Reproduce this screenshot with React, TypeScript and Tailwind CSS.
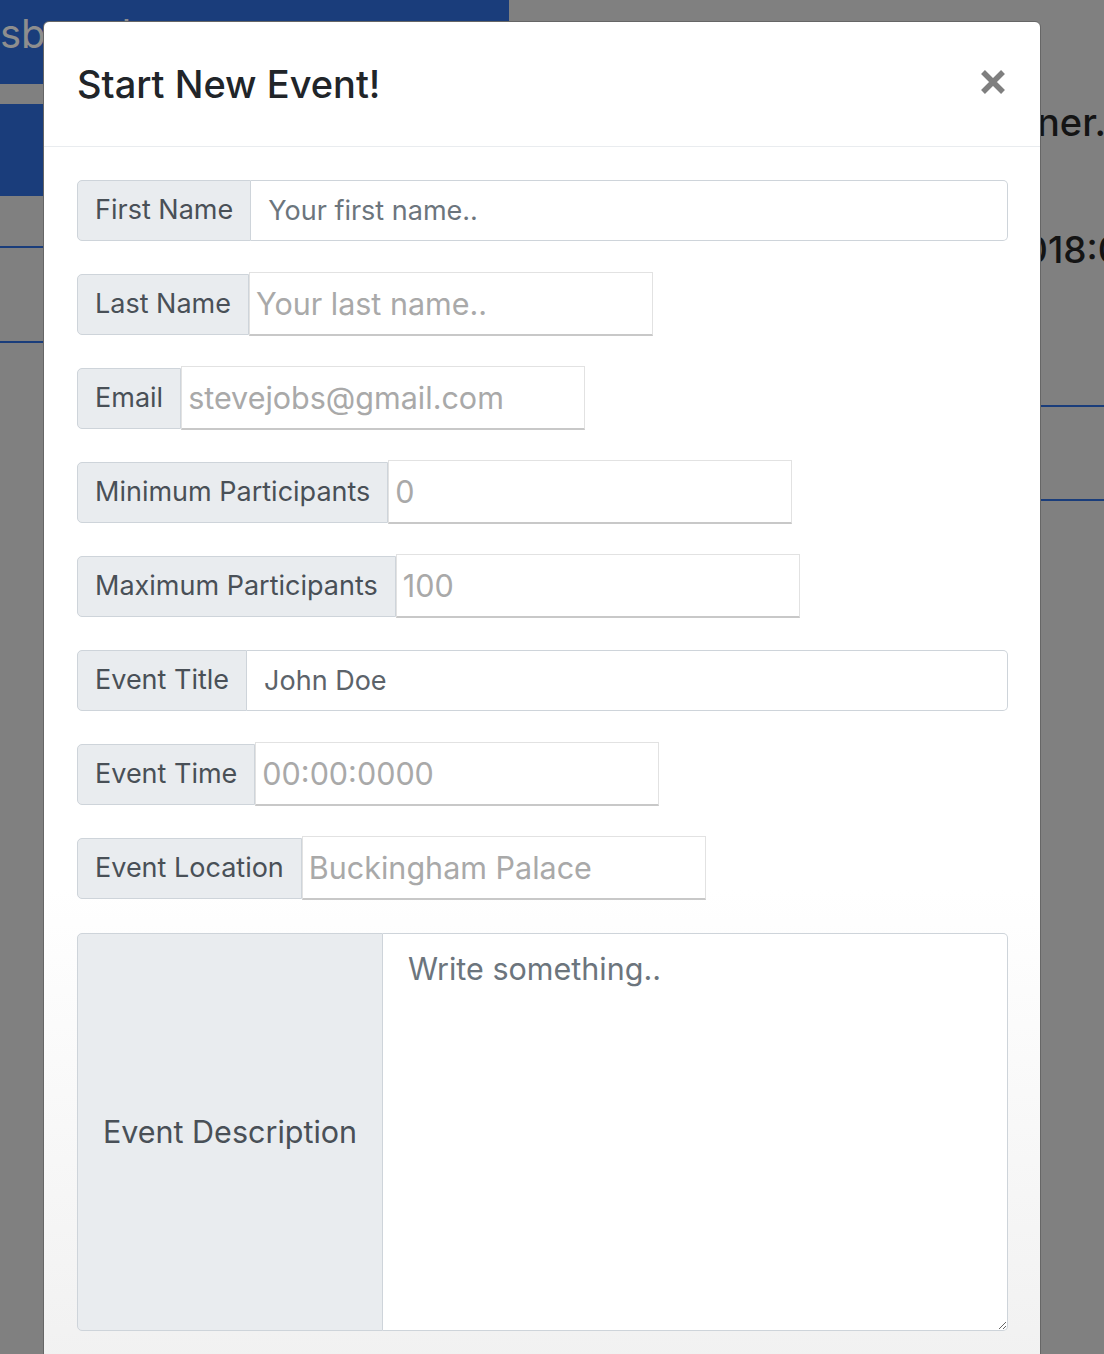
import React from "react";

type Field = {
  label: string;
  placeholder: string;
  plain?: boolean;
  dark?: boolean;
};

const fields: Field[] = [
  { label: "First Name", placeholder: "Your first name.." },
  { label: "Last Name", placeholder: "Your last name..", plain: true },
  { label: "Email", placeholder: "stevejobs@gmail.com", plain: true },
  { label: "Minimum Participants", placeholder: "0", plain: true },
  { label: "Maximum Participants", placeholder: "100", plain: true },
  { label: "Event Title", placeholder: "John Doe", dark: true },
  { label: "Event Time", placeholder: "00:00:0000", plain: true },
  { label: "Event Location", placeholder: "Buckingham Palace", plain: true },
];

function FieldRow({ label, placeholder, plain, dark }: Field) {
  return (
    <div className="flex h-[64px] items-end">
      <span className="flex h-[61px] shrink-0 items-center rounded-l-[5px] border border-[#ced4da] bg-[#e9ecef] px-[17px] text-[27px] text-[#495057]">
        {label}
      </span>
      {plain ? (
        <input
          className="mb-[-1px] h-[64px] w-[404px] border border-[#e2e2e2] border-b-2 border-b-[#c8c8c8] bg-white px-[6px] text-[30.5px] outline-none placeholder:text-[#a9a9a9]"
          placeholder={placeholder}
        />
      ) : (
        <input
          className={
            "h-[61px] flex-1 rounded-r-[5px] border border-l-0 border-[#ced4da] bg-white px-[17px] text-[27px] outline-none " +
            (dark ? "placeholder:text-[#5c636a]" : "placeholder:text-[#6c757d]")
          }
          placeholder={placeholder}
        />
      )}
    </div>
  );
}

export default function App() {
  return (
    <div className="relative h-[1354px] w-[1104px] overflow-hidden bg-[#808080] font-['Inter',sans-serif]">
      {/* dimmed page behind the modal */}
      <div className="flex h-full">
        <div className="w-[509px] shrink-0">
          <div className="h-[84px] bg-[#1a3d7b] pt-[10px] text-[40px] leading-[48px] text-[#8e8e8e]">
            sboard
          </div>
          <div className="h-[20px]" />
          <div className="h-[92px] bg-[#1a3d7b]" />
          <div className="h-[52px] border-b-2 border-[#1a3d7b]" />
          <div className="h-[95px] border-b-2 border-[#1a3d7b]" />
        </div>
        <div className="flex-1">
          <div className="ml-[-509px] whitespace-nowrap pt-[98px] text-[38px] font-medium leading-[48px] text-[#141414]">
            <span className="inline-block w-[1037px] text-right">Event Plan</span>ner.
          </div>
          <div className="ml-[-509px] whitespace-nowrap pt-[80px] text-[37px] font-medium leading-[48px] text-[#141414]">
            <span className="inline-block w-[1024px] text-right">Date: 2</span>018:00
          </div>
          <div className="h-[133px] border-b-2 border-[#1a3d7b]" />
          <div className="h-[94px] border-b-2 border-[#1a3d7b]" />
        </div>
      </div>

      {/* modal */}
      <div className="absolute left-[43px] top-[21px] h-[1400px] w-[998px] rounded-[6px] border border-[#666] bg-[linear-gradient(to_bottom,#ffffff_62%,#f1f1f1_96%)]">
        <div className="flex h-[125px] items-center justify-between border-b border-[#e9ecef] pl-[33px] pr-[34px]">
          <h4 className="text-[38px] font-medium text-[#212529]">Start New Event!</h4>
          <svg width="26" height="26" viewBox="0 0 26 26" className="mt-[-4px]">
            <path d="M3 3L23 23M23 3L3 23" stroke="#7f7f7f" strokeWidth="5.5" />
          </svg>
        </div>
        <div className="flex flex-col gap-[30px] pl-[33px] pr-[32px] pt-[30px]">
          {fields.map((f) => (
            <FieldRow key={f.label} {...f} />
          ))}
          <div className="mt-[4px] flex h-[398px]">
            <span className="flex w-[306px] shrink-0 items-center justify-center rounded-l-[5px] border border-[#ced4da] bg-[#e9ecef] text-[30.5px] text-[#495057]">
              Event Description
            </span>
            <textarea
              className="flex-1 rounded-r-[5px] border border-l-0 border-[#ced4da] bg-white px-[25px] pt-[12px] text-[30.5px] outline-none placeholder:text-[#6c757d]"
              placeholder="Write something.."
            />
          </div>
        </div>
      </div>
    </div>
  );
}
